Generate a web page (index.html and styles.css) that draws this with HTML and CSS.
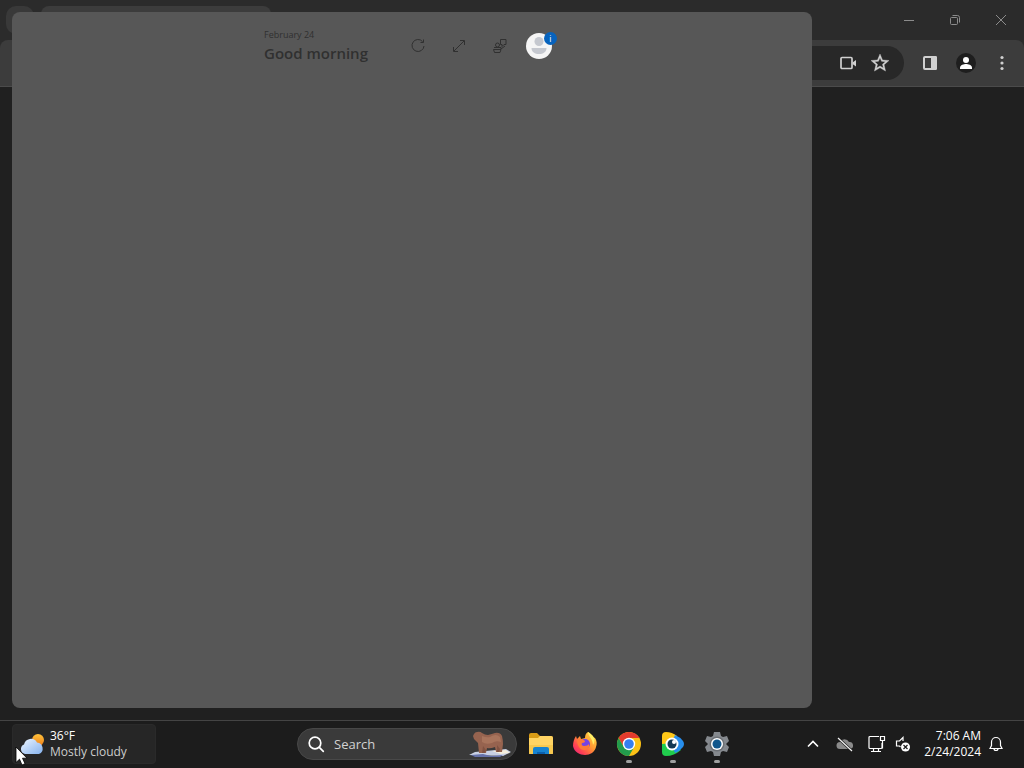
FILE: index.html
```html
<!DOCTYPE html>
<html lang="en">
  <head>
    <meta charset="UTF-8" />
    <meta name="viewport" content="width=device-width, initial-scale=1.0" />
    <title>Desktop</title>
    <link rel="stylesheet" href="styles.css">
  </head>
  <body>
    <div class="desktop">
      <!-- Browser window -->
      <div class="browser">
        <div class="tab-strip">
          <button class="tab-search" aria-label="Search tabs"></button>
          <div class="tab"></div>
          <div class="window-controls">
            <button aria-label="Minimize">
              <svg width="12" height="12" viewBox="0 0 12 12"><path d="M1 6.5h10" /></svg>
            </button>
            <button aria-label="Restore">
              <svg width="12" height="12" viewBox="0 0 12 12"><rect x="1.5" y="3.5" width="7" height="7" rx="1" /><path d="M3.5 1.5h5q2 0 2 2v5" /></svg>
            </button>
            <button aria-label="Close">
              <svg width="12" height="12" viewBox="0 0 12 12"><path d="M1 1l10 10M11 1L1 11" /></svg>
            </button>
          </div>
        </div>
        <div class="toolbar">
          <div class="address-bar">
            <button aria-label="Camera">
              <svg width="18" height="18" viewBox="0 0 18 18" fill="none" stroke="#d0d0d0" stroke-width="1.7"><rect x="2" y="3.5" width="11" height="11" rx="1" /><path d="M13.5 8.500L17 6v6.500L13.500 10z" fill="#d0d0d0" stroke="none" /></svg>
            </button>
            <button aria-label="Bookmark this tab">
              <svg width="18" height="18" viewBox="2 2 20 20" fill="#d0d0d0" stroke="#d0d0d0" stroke-width=".4"><path d="M22 9.240l-7.190-.620L12 2 9.190 8.630 2 9.240l5.460 4.730L5.820 21 12 17.270 18.180 21l-1.630-7.030L22 9.240zM12 15.400l-3.760 2.270 1-4.280-3.320-2.880 4.380-.380L12 6.100l1.710 4.040 4.380.380-3.320 2.880 1 4.280L12 15.400z" /></svg>
            </button>
          </div>
          <button class="tool" aria-label="Side panel">
            <svg width="16" height="16" viewBox="0 0 16 16"><rect x="2" y="2" width="12" height="12" rx="1" fill="none" stroke="#d0d0d0" stroke-width="2" /><path d="M9 1h5l1 1v12l-1 1H9z" fill="#d0d0d0" /></svg>
          </button>
          <button class="tool" aria-label="Profile">
            <svg width="20" height="20" viewBox="0 0 20 20"><circle cx="10" cy="10" r="10" fill="#1e1e1e" /><circle cx="10" cy="7" r="3" fill="#fff" /><path d="M4 16v-1.500c0-2.500 4-3.500 6-3.500s6 1 6 3.500V16z" fill="#fff" /></svg>
          </button>
          <button class="tool" aria-label="Menu">
            <svg width="16" height="16" viewBox="0 0 16 16" fill="#d0d0d0"><circle cx="8" cy="2.500" r="1.600" /><circle cx="8" cy="8" r="1.600" /><circle cx="8" cy="13.500" r="1.600" /></svg>
          </button>
        </div>
        <div class="page"></div>
      </div>

      <!-- Widgets board -->
      <div class="widgets">
        <div class="widgets-header">
          <div class="greeting">
            <p>February 24</p>
            <h1>Good morning</h1>
          </div>
          <div class="widget-actions">
            <button aria-label="Refresh">
              <svg width="16" height="16" viewBox="0 0 16 16"><path d="M12.500 3.500A6 6 0 1 0 14 8M13.500 1.500v3h-3" /></svg>
            </button>
            <button aria-label="Expand">
              <svg width="16" height="16" viewBox="0 0 16 16"><path d="M3 13L13 3M9 2.500h4.500V7M2.500 9v4.500H7" /></svg>
            </button>
            <button aria-label="Add widgets">
              <svg width="16" height="16" viewBox="0 0 16 16"><circle cx="5.500" cy="7" r="2" /><path d="M8.500 1.500h5.500v5h-2l-2 2v-2H8.500zM2 9.500h7v1.500l4-3M1.500 11.500h7.500l-1 3H2.500z" /></svg>
            </button>
          </div>
          <button class="account" aria-label="Account">
            <svg width="26" height="26" viewBox="0 0 26 26"><circle cx="13" cy="13" r="13" fill="#f5f5f5" /><circle cx="13" cy="8.500" r="4.500" fill="#c5c8cf" /><path d="M5.500 15h15c0 4-3.500 6-7.500 6s-7.500-2-7.500-6z" fill="#c5c8cf" /></svg>
            <span class="badge">i</span>
          </button>
        </div>
      </div>

      <!-- Taskbar -->
      <div class="taskbar">
        <button class="weather">
          <svg width="28" height="28" viewBox="0 0 28 28">
            <defs>
              <linearGradient id="cloud" x1="0" y1="0" x2="1" y2="1"><stop offset="0" stop-color="#edf5ff" /><stop offset="1" stop-color="#85b2ee" /></linearGradient>
              <linearGradient id="sun" x1="0" y1="0" x2="0" y2="1"><stop offset="0" stop-color="#ffc33b" /><stop offset="1" stop-color="#ee7d19" /></linearGradient>
            </defs>
            <circle cx="20" cy="10" r="6" fill="url(#sun)" />
            <path d="M7 24a5 5 0 0 1-1-9.500 7 7 0 0 1 13-2A6 6 0 0 1 21 24z" fill="url(#cloud)" />
          </svg>
          <span class="weather-text"><span>36°F</span><span class="muted">Mostly cloudy</span></span>
        </button>

        <div class="apps">
          <button class="search">
            <svg width="18" height="18" viewBox="0 0 18 18" fill="none" stroke="#fff" stroke-width="1.700"><circle cx="8" cy="8" r="5.800" /><path d="M12.300 12.300l4 4" stroke-linecap="round" /></svg>
            <span>Search</span>
            <svg class="search-art" width="44" height="28" viewBox="0 0 44 28">
              <path d="M1 25l6-3 31-3 5 3-8 4z" fill="#c8d0e3" />
              <path d="M3 25l12-1 8 2 12-1-3 2H7z" fill="#6672aa" />
              <path d="M24 21l14-1 4 3-9 1z" fill="#f5eedc" />
              <path d="M6 4q1-2 3-2 3-1 5 1 3 2 6 2 4-1 7-2 5-1 7 3 1 4 1 8l-1 8h-6l-1-5q-5 2-8 1l-1 5h-7l-1-10-4-4-1-3z" fill="#96634f" />
              <path d="M14 6q5 2 8 1 6-4 10 0l1 5q-5-2-9 1-6 2-10-1z" fill="#a8745c" />
              <path d="M15 16l3 4-1 3h-3zM29 15l3 4-1 3h-2z" fill="#805241" />
            </svg>
          </button>
          <button class="app" aria-label="File Explorer">
            <svg width="26" height="26" viewBox="0 0 26 26">
              <path d="M1 4q0-2 2-2h6l3 3h11q2 0 2 2v5H1z" fill="#d99c16" />
              <path d="M1 7h9l2-2h11q2 0 2 2v15q0 1-1 1H2q-1 0-1-1z" fill="#ffd463" />
              <path d="M1 14h24v8q0 1-1 1H2q-1 0-1-1z" fill="#f7c84f" />
              <path d="M5 23v-5q0-2 2-2h12q2 0 2 2v5z" fill="#1683d0" />
              <path d="M9 23v-2h8v2z" fill="#0b60ad" />
            </svg>
          </button>
          <button class="app" aria-label="Firefox">
            <svg width="26" height="26" viewBox="0 0 26 26">
              <defs>
                <linearGradient id="fox" x1="1" y1="0" x2="0" y2="1"><stop offset="0" stop-color="#ffe94a" /><stop offset=".45" stop-color="#ff9532" /><stop offset=".75" stop-color="#ff4054" /><stop offset="1" stop-color="#df1b86" /></linearGradient>
              </defs>
              <path d="M16 1c2 1 4 3 5 5l2 1c2 3 2 6 1 9-1 5-6 8-11 8S2 21 1 15c0-4 1-7 3-10l1 3 3-3 1 3 4-1c0-3 1-5 3-6z" fill="url(#fox)" />
              <circle cx="13" cy="13" r="5" fill="#7543e5" />
              <path d="M5 9c3-1 6-1 8 1 0 1-1 2-3 2-1 1 0 3 2 3 3 0 4-1 5-2 1 4-2 6-5 6-4 0-7-5-7-10z" fill="#ff7a38" />
              <path d="M16 1c0 4 5 7 5 13 2-3 2-6 0-9-2-2-3-3-5-4z" fill="#ffed65" />
            </svg>
          </button>
          <button class="app running" aria-label="Google Chrome">
            <svg width="26" height="26" viewBox="0 0 26 26">
              <circle cx="13" cy="13" r="12" fill="#fbc116" />
              <path d="M2.600 7A12 12 0 0 1 23.400 7H13l-5.200 9z" fill="#e33b2e" />
              <path d="M2.600 7a12 12 0 0 0 10.400 18l5.200-9H7.800z" fill="#229b4c" />
              <circle cx="13" cy="13" r="6.200" fill="#fff" />
              <circle cx="13" cy="13" r="4.800" fill="#367ff0" />
            </svg>
          </button>
          <button class="app running" aria-label="Media player">
            <svg width="26" height="26" viewBox="0 0 26 26">
              <path d="M2 5q0-4 4-4 6 0 11 4L8 16l-6 4z" fill="#ffc818" />
              <path d="M2 13l11-1 8 7q-7 6-15 6-4 0-4-4z" fill="#20cd4d" />
              <path d="M15 4q5 2 8 6 2 3 0 6-3 4-8 6l-4-9z" fill="#278eed" />
              <circle cx="12" cy="13" r="6.500" fill="#fff" />
              <circle cx="12" cy="13" r="4.500" fill="#143954" />
              <circle cx="14" cy="11" r="2" fill="#fff" />
            </svg>
          </button>
          <button class="app running" aria-label="Settings">
            <svg width="26" height="26" viewBox="0 0 26 26">
              <path d="M10 1h6l1 4 2 1 4-1 2 5-3 3 3 3-2 5-4-1-2 1-1 4h-6l-1-4-2-1-4 1-2-5 3-3-3-3 2-5 4 1 2-1z" fill="#85898e" />
              <circle cx="13" cy="13" r="7.500" fill="#6c7075" />
              <circle cx="13" cy="13" r="6" fill="#fff" />
              <circle cx="13" cy="13" r="4.500" fill="#11578c" />
            </svg>
          </button>
        </div>

        <div class="tray">
          <button aria-label="Show hidden icons">
            <svg width="12" height="16" viewBox="0 0 12 16" fill="none" stroke="#fff" stroke-width="1.600"><path d="M1 10.500l5-5 5 5" /></svg>
          </button>
          <button class="cloud" aria-label="OneDrive">
            <svg width="18" height="16" viewBox="0 0 18 16"><path d="M4 13a3.500 3.500 0 0 1 0-7 5 5 0 0 1 9 0 3.500 3.500 0 0 1 1 7z" fill="#8a8a8a" /><path d="M2 2l14 13" stroke="#1c1c1c" stroke-width="2.500" /><path d="M2 2l14 13" stroke="#f5f5f5" stroke-width="1.200" /></svg>
          </button>
          <button class="quick-settings" aria-label="Network and volume">
            <svg width="18" height="18" viewBox="0 0 18 18" fill="none" stroke="#fff" stroke-width="1.200"><path d="M11 1.500H2q-1 0-1 1v10q0 1 1 1h11q1 0 1-1V8M5.500 13.500v3M10.500 13.500v3M3 16.500h10M12.500 1.500h4v4h-4zM14.500 5.500v8" /></svg>
            <svg width="18" height="18" viewBox="0 0 18 18" fill="none" stroke="#fff" stroke-width="1.200"><path d="M9 6V2.500L5.500 6H2.500v5h3l1 1" /><circle cx="11.500" cy="12" r="4.500" fill="#fff" stroke="none" /><path d="M9.500 10l4 4M13.500 10l-4 4" stroke="#1c1c1c" /></svg>
          </button>
          <button class="clock"><span>7:06 AM</span><span>2/24/2024</span></button>
          <button aria-label="Notifications">
            <svg width="14" height="18" viewBox="0 0 14 18" fill="none" stroke="#fff" stroke-width="1.200"><path d="M1 13.500l1.500-3V7a4.500 4.500 0 0 1 9 0v3.500l1.500 3zM5 13.500a2 2 0 0 0 4 0" /></svg>
          </button>
        </div>
      </div>

      <svg class="cursor" width="13" height="20" viewBox="0 0 13 20"><path d="M1 1v15.500l3.500-3.300L7 19l3-1.300-2.500-5.500H12z" fill="#fff" stroke="#000" stroke-width=".8" /></svg>
    </div>
  </body>
</html>
```
FILE: styles.css
```css
* {
  margin: 0;
  padding: 0;
  box-sizing: border-box;
}

body {
  font-family: "Open Sans", "Noto Sans", sans-serif;
  font-size: 12px;
  line-height: 16px;
  color: #fff;
  background: #202020;
}

button {
  border: none;
  background: none;
  color: inherit;
  font: inherit;
}

svg {
  display: block;
}

.desktop {
  position: relative;
  height: 100vh;
  overflow: hidden;
  display: flex;
  flex-direction: column;
}

/* Browser window */
.browser {
  flex: 1;
  display: flex;
  flex-direction: column;
  background: #2b2b2b;
}

.tab-strip {
  height: 40px;
  display: flex;
  align-items: flex-start;
  gap: 7px;
  padding-left: 6px;
}

.tab-search {
  width: 28px;
  height: 28px;
  margin-top: 6px;
  border-radius: 10px;
  background: #393939;
}

.tab {
  width: 230px;
  height: 34px;
  margin-top: 6px;
  border-radius: 8px 8px 0 0;
  background: #3c3c3c;
}

.window-controls {
  display: flex;
  height: 40px;
  margin-left: auto;
}

.window-controls button {
  width: 46px;
  display: flex;
  align-items: center;
  justify-content: center;
}

.window-controls svg {
  fill: none;
  stroke: #8c8c8c;
}

.toolbar {
  height: 47px;
  display: flex;
  align-items: center;
  gap: 16px;
  padding: 0 12px 0 64px;
  background: #3c3c3c;
  border-bottom: 1px solid #4b4b4b;
  border-radius: 8px 8px 0 0;
}

.address-bar {
  flex: 1;
  height: 34px;
  display: flex;
  align-items: center;
  justify-content: flex-end;
  gap: 14px;
  padding-right: 15px;
  border-radius: 17px;
  background: #282828;
}

.tool {
  width: 20px;
  display: flex;
  justify-content: center;
}

.page {
  flex: 1;
  background: #202020;
}

/* Widgets board */
.widgets {
  position: absolute;
  top: 12px;
  bottom: 60px;
  left: 12px;
  width: 80%;
  max-width: 800px;
  padding-top: 16px;
  border-radius: 8px;
  background: #575757;
}

.widgets-header {
  display: flex;
  justify-content: center;
  align-items: center;
  color: #303030;
}

.greeting p {
  font-size: 9px;
  line-height: 14px;
}

.greeting h1 {
  font-size: 15px;
  line-height: 22px;
  font-weight: 600;
}

.widget-actions {
  display: flex;
  gap: 25px;
  margin: 0 18px 0 42px;
}

.widget-actions svg {
  fill: none;
  stroke: #303030;
}

.account {
  position: relative;
  margin-right: 8px;
}

.badge {
  position: absolute;
  top: -1px;
  right: -5px;
  width: 13px;
  height: 13px;
  border-radius: 50%;
  background: #0763bd;
  color: #fff;
  font-size: 9px;
  line-height: 13px;
}

/* Taskbar */
.taskbar {
  height: 48px;
  display: grid;
  grid-template-columns: 1fr auto 1fr;
  align-items: center;
  padding: 0 0 2px 12px;
  background: #1c1c1c;
  border-top: 1px solid #444;
}

.weather {
  width: 144px;
  height: 40px;
  display: flex;
  align-items: center;
  gap: 4px;
  padding-left: 5px;
  border: 1px solid #2a2a2a;
  border-radius: 4px;
  background: #262626;
  text-align: left;
}

.weather-text {
  display: flex;
  flex-direction: column;
  white-space: nowrap;
}

.muted {
  color: #ccc;
}

.apps {
  display: flex;
  align-items: center;
}

.search {
  width: 220px;
  height: 32px;
  display: flex;
  align-items: center;
  gap: 9px;
  margin-right: 2px;
  padding: 0 4px 0 9px;
  border: 1px solid #484848;
  border-radius: 16px;
  background: #3a3a3a;
  color: #d2d2d2;
  font-size: 13px;
}

.search-art {
  margin-left: auto;
}

.app {
  width: 44px;
  height: 40px;
  display: flex;
  align-items: center;
  justify-content: center;
  position: relative;
}

.running::after {
  content: "";
  position: absolute;
  bottom: 1px;
  width: 6px;
  height: 3px;
  border-radius: 2px;
  background: #a0a0a0;
}

.tray {
  display: flex;
  align-items: center;
  justify-content: flex-end;
  gap: 8px;
  padding-right: 21px;
}

.cloud {
  margin: 0 6px 0 9px;
}

.quick-settings {
  display: flex;
  gap: 8px;
}

.clock {
  display: flex;
  flex-direction: column;
  margin-left: 4px;
  text-align: right;
}

/* Mouse pointer */
.cursor {
  position: absolute;
  left: 15px;
  bottom: 2px;
}
```
